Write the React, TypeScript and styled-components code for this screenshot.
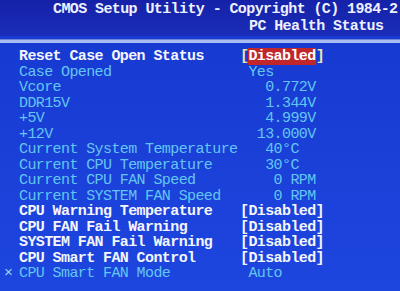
import React from 'react';
import styled, { createGlobalStyle } from 'styled-components';

const GlobalStyle = createGlobalStyle`
  html, body {
    margin: 0;
    padding: 0;
    background: #1431c8;
  }
`;

const Screen = styled.div`
  width: 400px;
  height: 291px;
  overflow: hidden;
  font-family: "Liberation Mono", "DejaVu Sans Mono", monospace;
  font-size: 15px;
  letter-spacing: -0.6px;
  background: linear-gradient(180deg, #1638cf 0%, #1a40d8 55%, #1d46de 100%);
`;

const Header = styled.div`
  padding-top: 1px;
  height: 36px;
  box-sizing: border-box;
  background: linear-gradient(180deg, #1522a8 0%, #1a2cb8 100%);
  color: #eef0ff;
  font-weight: bold;
  white-space: pre;
`;

const HeaderLine = styled.div<{ $indent: number }>`
  line-height: 17px;
  padding-left: ${p => p.$indent}px;
`;

const Separator = styled.div`
  height: 3px;
  margin-top: 3px;
  background: #a9bcf2;
  border-top: 1px solid #6f86e0;
`;

const List = styled.div`
  padding-top: 6px;
`;

const Row = styled.div<{ $active: boolean }>`
  display: grid;
  grid-template-columns: 19px 221px 1fr;
  line-height: 15.5px;
  white-space: pre;
  color: ${p => (p.$active ? '#f4f5ff' : '#63c6f2')};
  font-weight: ${p => (p.$active ? 'bold' : 'normal')};
`;

const Marker = styled.span`
  padding-left: 4px;
  color: #8fd6f6;
`;

const Value = styled.span`
  color: inherit;
`;

const Bracket = styled.span`
  color: #ece6a6;
  font-weight: bold;
`;

const Selected = styled.span`
  background: #c0262a;
  color: #ffffff;
  font-weight: bold;
`;

type Item = {
  label: string;
  value: string;
  active: boolean;
  marker?: string;
  selected?: boolean;
};

const items: Item[] = [
  { label: 'Reset Case Open Status', value: 'Disabled', active: true, selected: true },
  { label: 'Case Opened', value: ' Yes', active: false },
  { label: 'Vcore', value: '   0.772V', active: false },
  { label: 'DDR15V', value: '   1.344V', active: false },
  { label: '+5V', value: '   4.999V', active: false },
  { label: '+12V', value: '  13.000V', active: false },
  { label: 'Current System Temperature', value: '   40°C', active: false },
  { label: 'Current CPU Temperature', value: '   30°C', active: false },
  { label: 'Current CPU FAN Speed', value: '    0 RPM', active: false },
  { label: 'Current SYSTEM FAN Speed', value: '    0 RPM', active: false },
  { label: 'CPU Warning Temperature', value: '[Disabled]', active: true },
  { label: 'CPU FAN Fail Warning', value: '[Disabled]', active: true },
  { label: 'SYSTEM FAN Fail Warning', value: '[Disabled]', active: true },
  { label: 'CPU Smart FAN Control', value: '[Disabled]', active: true },
  { label: 'CPU Smart FAN Mode', value: ' Auto', active: false, marker: '×' },
];

const App = () => {
  return (
    <Screen>
      <GlobalStyle />
      <Header>
        <HeaderLine $indent={53}>CMOS Setup Utility - Copyright (C) 1984-2</HeaderLine>
        <HeaderLine $indent={249}>PC Health Status</HeaderLine>
      </Header>
      <Separator />
      <List>
        {items.map(item => (
          <Row key={item.label} $active={item.active}>
            <Marker>{item.marker ?? ''}</Marker>
            <span>{item.label}</span>
            {item.selected ? (
              <Value>
                <Bracket>[</Bracket>
                <Selected>{item.value}</Selected>
                <Bracket>]</Bracket>
              </Value>
            ) : (
              <Value>{item.value}</Value>
            )}
          </Row>
        ))}
      </List>
    </Screen>
  );
};

export default App;
